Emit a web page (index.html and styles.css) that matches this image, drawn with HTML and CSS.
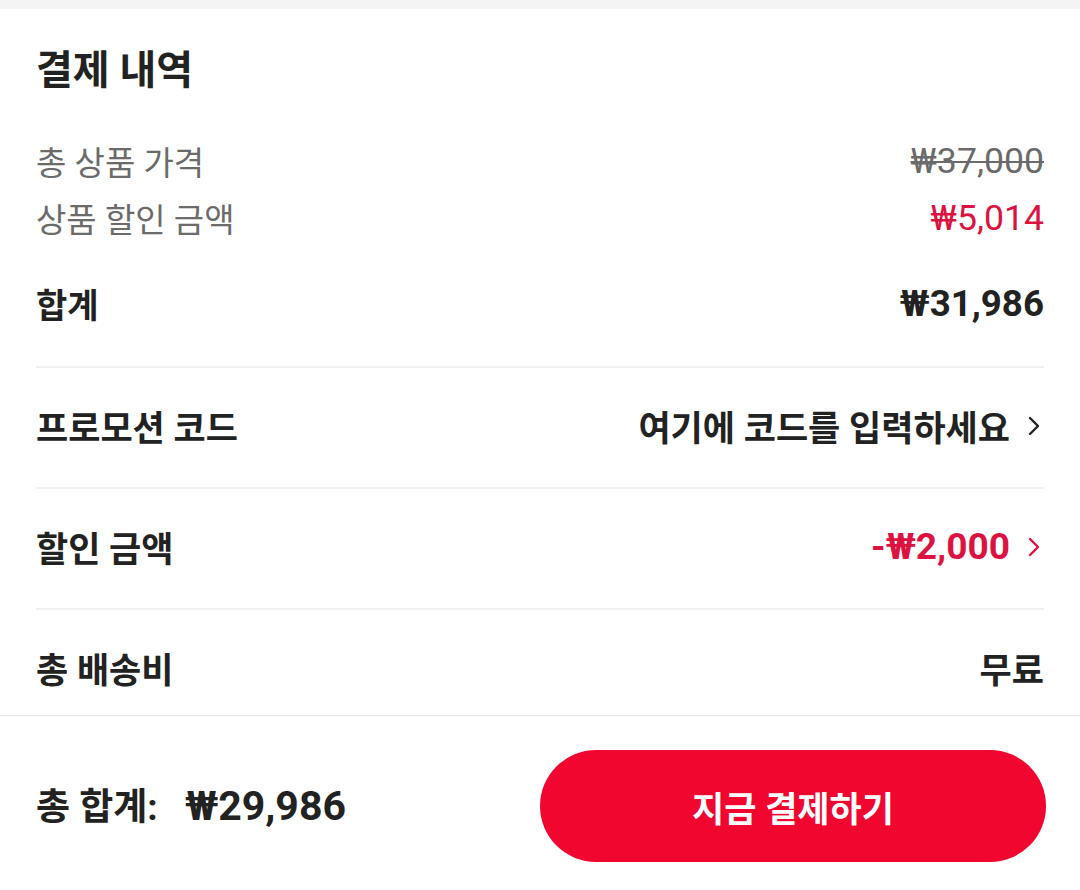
FILE: index.html
```html
<!DOCTYPE html>
<html lang="ko">
<head>
    <meta charset="UTF-8">
    <meta name="viewport" content="width=device-width, initial-scale=1.0">
    <title>결제 내역</title>
    <link rel="stylesheet" href="styles.css">
</head>
<body>
    <div class="top-band"></div>

    <main class="summary">
        <h1>결제 내역</h1>

        <div class="price-row">
            <span>총 상품 가격</span>
            <span class="num old-price">₩37,000</span>
        </div>
        <div class="price-row">
            <span>상품 할인 금액</span>
            <span class="num red">₩5,014</span>
        </div>

        <div class="subtotal">
            <span>합계</span>
            <span class="num">₩31,986</span>
        </div>

        <div class="item">
            <span>프로모션 코드</span>
            <span class="link">
                여기에 코드를 입력하세요
                <svg class="chevron" viewBox="0 0 12 20" width="12" height="20"><path d="M2 2 L10 10 L2 18" fill="none" stroke="currentColor" stroke-width="2.4" stroke-linecap="round" stroke-linejoin="round"/></svg>
            </span>
        </div>

        <div class="item">
            <span>할인 금액</span>
            <span class="link red">
                <span class="num">-₩2,000</span>
                <svg class="chevron" viewBox="0 0 12 20" width="12" height="20"><path d="M2 2 L10 10 L2 18" fill="none" stroke="currentColor" stroke-width="2.4" stroke-linecap="round" stroke-linejoin="round"/></svg>
            </span>
        </div>

        <div class="item">
            <span>총 배송비</span>
            <span>무료</span>
        </div>
    </main>

    <footer class="checkout">
        <div class="total">총 합계: <span class="num total-amount">₩29,986</span></div>
        <button class="pay-btn">지금 결제하기</button>
    </footer>
</body>
</html>
```

FILE: styles.css
```css
html, body {
    height: 100%;
}

body {
    margin: 0;
    display: flex;
    flex-direction: column;
    background: #fff;
    color: #222;
    font-family: Roboto, "Noto Sans CJK KR", sans-serif;
}

.top-band {
    height: 9px;
    background: #f4f4f4;
    flex-shrink: 0;
}

.summary {
    flex: 1;
    overflow: hidden;
    padding: 0 36px;
}

h1 {
    margin: 38px 0 0;
    font-size: 40px;
    line-height: 48px;
    font-weight: 700;
}

/* digits render smaller than hangul, bump them up */
.num {
    font-size: 1.14em;
}

.price-row {
    display: flex;
    justify-content: space-between;
    align-items: center;
    height: 57px;
    font-size: 33px;
    color: #6b6b6b;
}

.price-row .num {
    font-size: 1.08em;
}

.price-row:first-of-type {
    margin-top: 37px;
}

.old-price {
    text-decoration: line-through;
    text-decoration-thickness: 2px;
}

.red {
    color: #dc1240;
}

.subtotal {
    display: flex;
    justify-content: space-between;
    align-items: center;
    height: 57px;
    padding: 29px 0 34px;
    font-size: 34px;
    font-weight: 700;
}

.subtotal .num {
    font-size: 1.08em;
}

.item {
    display: flex;
    justify-content: space-between;
    align-items: center;
    height: 115px;
    padding-bottom: 4px;
    border-top: 2px solid #f1f1f1;
    font-size: 35px;
    font-weight: 700;
}

.link {
    display: flex;
    align-items: center;
    gap: 18px;
}

.link .num {
    font-size: 1.06em;
}

.chevron {
    margin-right: 4px;
}

.checkout {
    flex-shrink: 0;
    height: 140px;
    padding: 34px 34px 0 36px;
    display: flex;
    justify-content: space-between;
    align-items: flex-start;
    border-top: 1px solid #e6e6e6;
}

.total {
    font-size: 37px;
    font-weight: 700;
    line-height: 112px;
}

.total-amount {
    font-size: 41px;
    margin-left: 18px;
}

.pay-btn {
    width: 506px;
    height: 112px;
    border: none;
    border-radius: 56px;
    background: #f0062f;
    color: #fff;
    font-family: Roboto, "Noto Sans CJK KR", sans-serif;
    font-size: 35px;
    font-weight: 700;
}
```
